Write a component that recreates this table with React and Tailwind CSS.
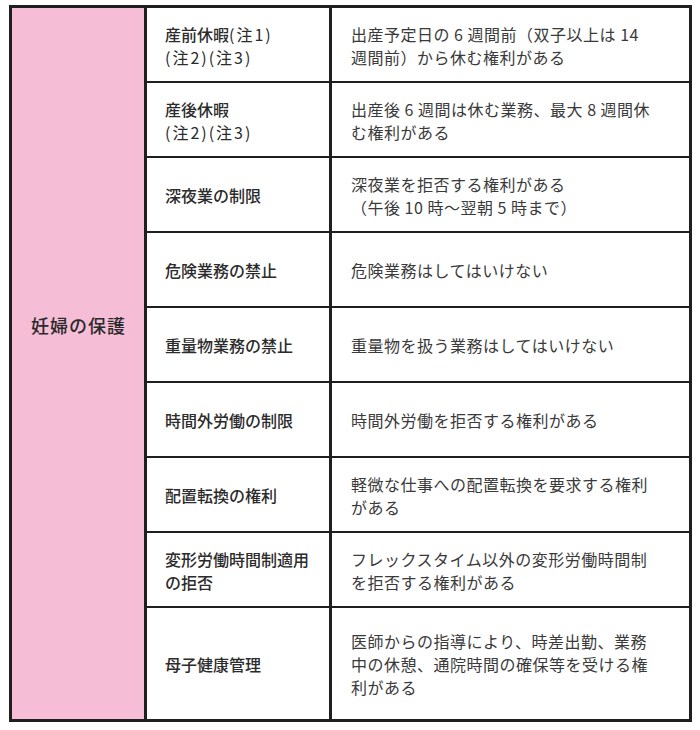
const rows = [
  {
    title: "産前休暇",
    note: ["(注1)", "(注2)(注3)"],
    text: ["出産予定日の 6 週間前（双子以上は 14", "週間前）から休む権利がある"],
  },
  {
    title: "産後休暇",
    note: [null, "(注2)(注3)"],
    text: ["出産後 6 週間は休む業務、最大 8 週間休", "む権利がある"],
  },
  {
    title: "深夜業の制限",
    text: ["深夜業を拒否する権利がある", "（午後 10 時～翌朝 5 時まで）"],
  },
  { title: "危険業務の禁止", text: ["危険業務はしてはいけない"] },
  { title: "重量物業務の禁止", text: ["重量物を扱う業務はしてはいけない"] },
  { title: "時間外労働の制限", text: ["時間外労働を拒否する権利がある"] },
  {
    title: "配置転換の権利",
    text: ["軽微な仕事への配置転換を要求する権利", "がある"],
  },
  {
    title: ["変形労働時間制適用", "の拒否"],
    text: ["フレックスタイム以外の変形労働時間制", "を拒否する権利がある"],
  },
  {
    title: "母子健康管理",
    text: [
      "医師からの指導により、時差出勤、業務",
      "中の休憩、通院時間の確保等を受ける権",
      "利がある",
    ],
    tall: true,
  },
];

const font = { fontFamily: '"Noto Sans CJK JP", "Noto Sans", sans-serif' };

function TitleCell({ row }) {
  if (Array.isArray(row.title)) {
    return row.title.map((t) => (
      <div key={t} className="font-medium">
        {t}
      </div>
    ));
  }
  if (row.note) {
    return (
      <>
        <div>
          <span className="font-medium">{row.title}</span>
          {row.note[0] && <span className="tracking-[2px]">{row.note[0]}</span>}
        </div>
        <div className="tracking-[2px]">{row.note[1]}</div>
      </>
    );
  }
  return <div className="font-medium">{row.title}</div>;
}

export default function App() {
  return (
    <div className="min-h-[730px] bg-white pt-[5px] pl-[9px]" style={font}>
      <div className="flex w-[683px] border-[3px] border-[#1f1f1f] text-[16px] leading-[23px]">
        <div className="flex w-[132px] shrink-0 flex-col justify-center bg-[#f6bdd7] pb-[76px] pl-[19px] text-[18px] font-medium tracking-[1px] text-[#2a2a2a]">
          妊婦の保護
        </div>
        <div className="flex flex-1 flex-col border-l-[3px] border-[#1f1f1f]">
          {rows.map((row, i) => (
            <div
              key={i}
              className={`flex ${row.tall ? "h-[111px]" : "h-[75px] border-b-2 border-[#1f1f1f]"}`}
            >
              <div className="flex w-[185px] shrink-0 flex-col justify-center border-r-[3px] border-[#1f1f1f] pl-[18px] pt-[2px] text-[#2b2b2b]">
                <TitleCell row={row} />
              </div>
              <div className="flex flex-1 flex-col justify-center pl-[19px] pt-[2px] tracking-[0.5px] text-[#3a3a3a]">
                {row.text.map((t) => (
                  <div key={t} className="whitespace-nowrap">
                    {t}
                  </div>
                ))}
              </div>
            </div>
          ))}
        </div>
      </div>
    </div>
  );
}
